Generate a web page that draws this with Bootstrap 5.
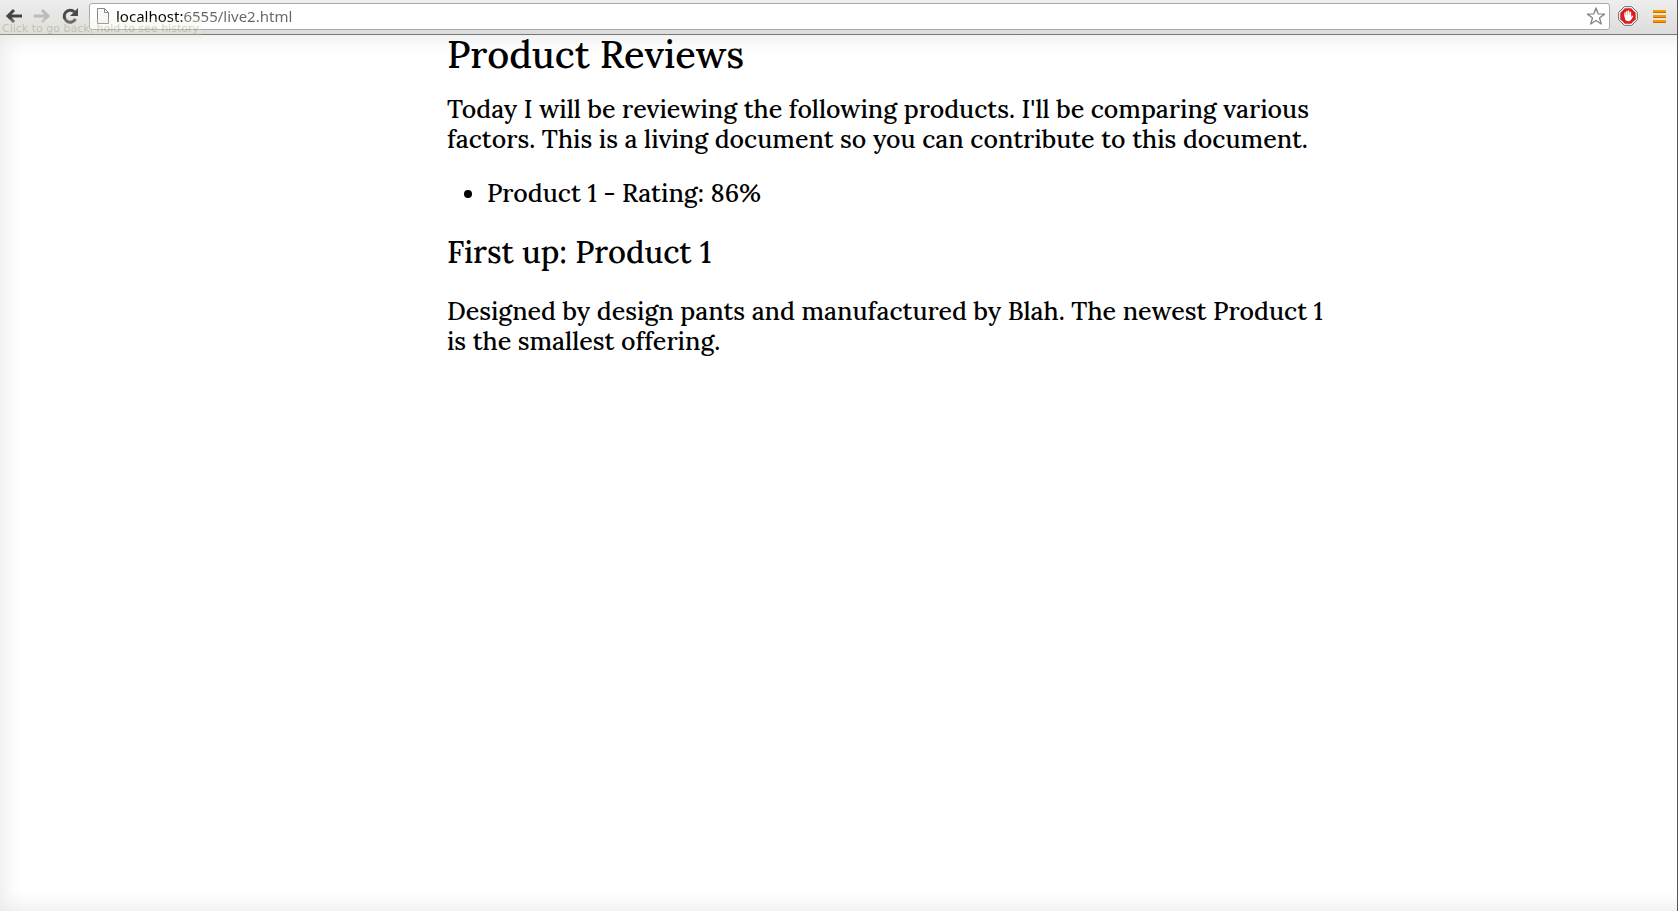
<!DOCTYPE html>
<html lang="en">
<head>
<meta charset="utf-8">
<meta name="viewport" content="width=device-width, initial-scale=1">
<title>Product Reviews</title>
<link href="https://cdn.jsdelivr.net/npm/bootstrap@5.3.0/dist/css/bootstrap.min.css" rel="stylesheet">
<style>
  body { color: #000; font-family: Lora, "Liberation Serif", serif; font-size: 25px; font-weight: 500; line-height: 30px; }
  .window-frame { border-right: 1px solid #555; }
  .toolbar { height: 35px; padding: 0 8px 2px 4px; background: linear-gradient(#eee, #dcdcdc); border-bottom: 1px solid #777; }
  .tool { width: 20px; height: 20px; padding: 0; border: 0; background: none; line-height: 0; flex: none; }
  .nav-tools { gap: 8px; margin-right: 9px; }
  .menu-tool { margin-left: 11px; }
  .address { height: 27px; padding: 0 3px 0 6px; gap: 6px; background: #fff; border: 1px solid #aaa; border-radius: 3px; }
  .address input { border: 0; padding: 0; outline: 0; min-width: 0; height: 22px; font: 15px/20px "Noto Sans", sans-serif; color: #666;
    background: linear-gradient(90deg, #000 67px, #666 67px); -webkit-background-clip: text; background-clip: text; -webkit-text-fill-color: transparent; }
  .hint { left: 0; top: 19px; height: 19px; padding: 0 2px; background: rgba(238,238,200,.22); color: rgba(90,90,90,.27); font: 11px/19px "DejaVu Sans", sans-serif; white-space: nowrap; pointer-events: none; }
  .page-view { box-shadow: inset 24px 0 24px -24px #e4e4e4, inset 0 24px 24px -24px #e4e4e4, inset 0 -24px 24px -24px #e4e4e4; }
  .review { margin-left: 26.65%; width: 54%; max-width: 890px; }
  .review h1 { font-size: 38px; line-height: 38px; margin: 0 0 21px; }
  .review h2 { font-size: 31px; line-height: 40px; margin: 0 0 24px; }
  .review p, .review ul { margin: 0 0 24px; }
  .review ul { padding-left: 40px; }
</style>
</head>
<body>
<div class="window-frame min-vh-100 d-flex flex-column position-relative">
  <header class="toolbar d-flex align-items-center">
    <div class="nav-tools d-flex">
      <button class="tool" type="button" aria-label="Back"><svg width="20" height="20" fill="none" stroke="#444" stroke-width="3"><path d="M18 10H5M10 4l-6 6 6 6"/></svg></button>
      <button class="tool" type="button" aria-label="Forward"><svg width="20" height="20" fill="none" stroke="#bbb" stroke-width="3"><path d="M2 10h13M10 4l6 6-6 6"/></svg></button>
      <button class="tool" type="button" aria-label="Reload"><svg width="20" height="20"><path d="M14.500 6A6 6 0 1 0 15.500 13" fill="none" stroke="#4a4a4a" stroke-width="3"/><path d="M18 2v8h-8z" fill="#4a4a4a"/></svg></button>
    </div>
    <div class="address d-flex align-items-center flex-grow-1">
      <svg width="14" height="16" fill="#fafafa" stroke="#888"><path d="M1.500 .5h7l4 4v11h-11zM8.500 .5v4h4"/></svg>
      <input class="flex-grow-1" type="text" aria-label="Address" value="localhost:6555/live2.html">
      <button class="tool" type="button" aria-label="Bookmark"><svg width="20" height="20"><path d="M10 2l2.200 5.900 6.300.2-5 3.900 1.800 6-5.300-3.500L4.700 18l1.800-6-5-3.900 6.300-.2z" fill="#fff" stroke="#888" stroke-width="1.400" stroke-linejoin="round"/></svg></button>
    </div>
    <button class="tool ms-2" type="button" aria-label="Ad blocker"><svg width="20" height="20"><path d="M6.300 .7h7.400L19.300 6.300v7.400L13.700 19.300H6.300L.7 13.700V6.300z" fill="#fff" stroke="#666"/><path d="M6.800 2.300h6.400l4.500 4.500v6.400l-4.500 4.500H6.800l-4.500-4.500V6.800z" fill="#d91e1e"/><path d="M7 10V7M8.800 10V5.500M10.600 10V5M12.400 10V6.500" stroke="#fff" stroke-width="1.500" stroke-linecap="round"/><path d="M6.300 9h6.800v2l1.200-1.500 1 .7-2.500 4c-1.300 1.400-4.500 1.400-5.600-.4z" fill="#fff"/></svg></button>
    <button class="tool menu-tool" type="button" aria-label="Menu"><svg width="20" height="20"><path d="M4 4h13v3H4zM4 9h13v3H4zM4 14h13v3H4z" fill="#f29a00"/><path d="M4 6.500h13M4 11.500h13M4 16.500h13" stroke="#cf6800"/></svg></button>
  </header>
  <div class="hint position-absolute" role="tooltip">Click to go back, hold to see history</div>
  <main class="page-view flex-grow-1">
    <article class="review">
      <h1>Product Reviews</h1>
      <p>Today I will be reviewing the following products. I'll be comparing various factors. This is a living document so you can contribute to this document.</p>
      <ul><li>Product 1 - Rating: 86%</li></ul>
      <h2>First up: Product 1</h2>
      <p>Designed by design pants and manufactured by Blah. The newest Product 1 is the smallest offering.</p>
    </article>
  </main>
</div>
<script src="https://cdn.jsdelivr.net/npm/bootstrap@5.3.0/dist/js/bootstrap.bundle.min.js"></script>
</body>
</html>
